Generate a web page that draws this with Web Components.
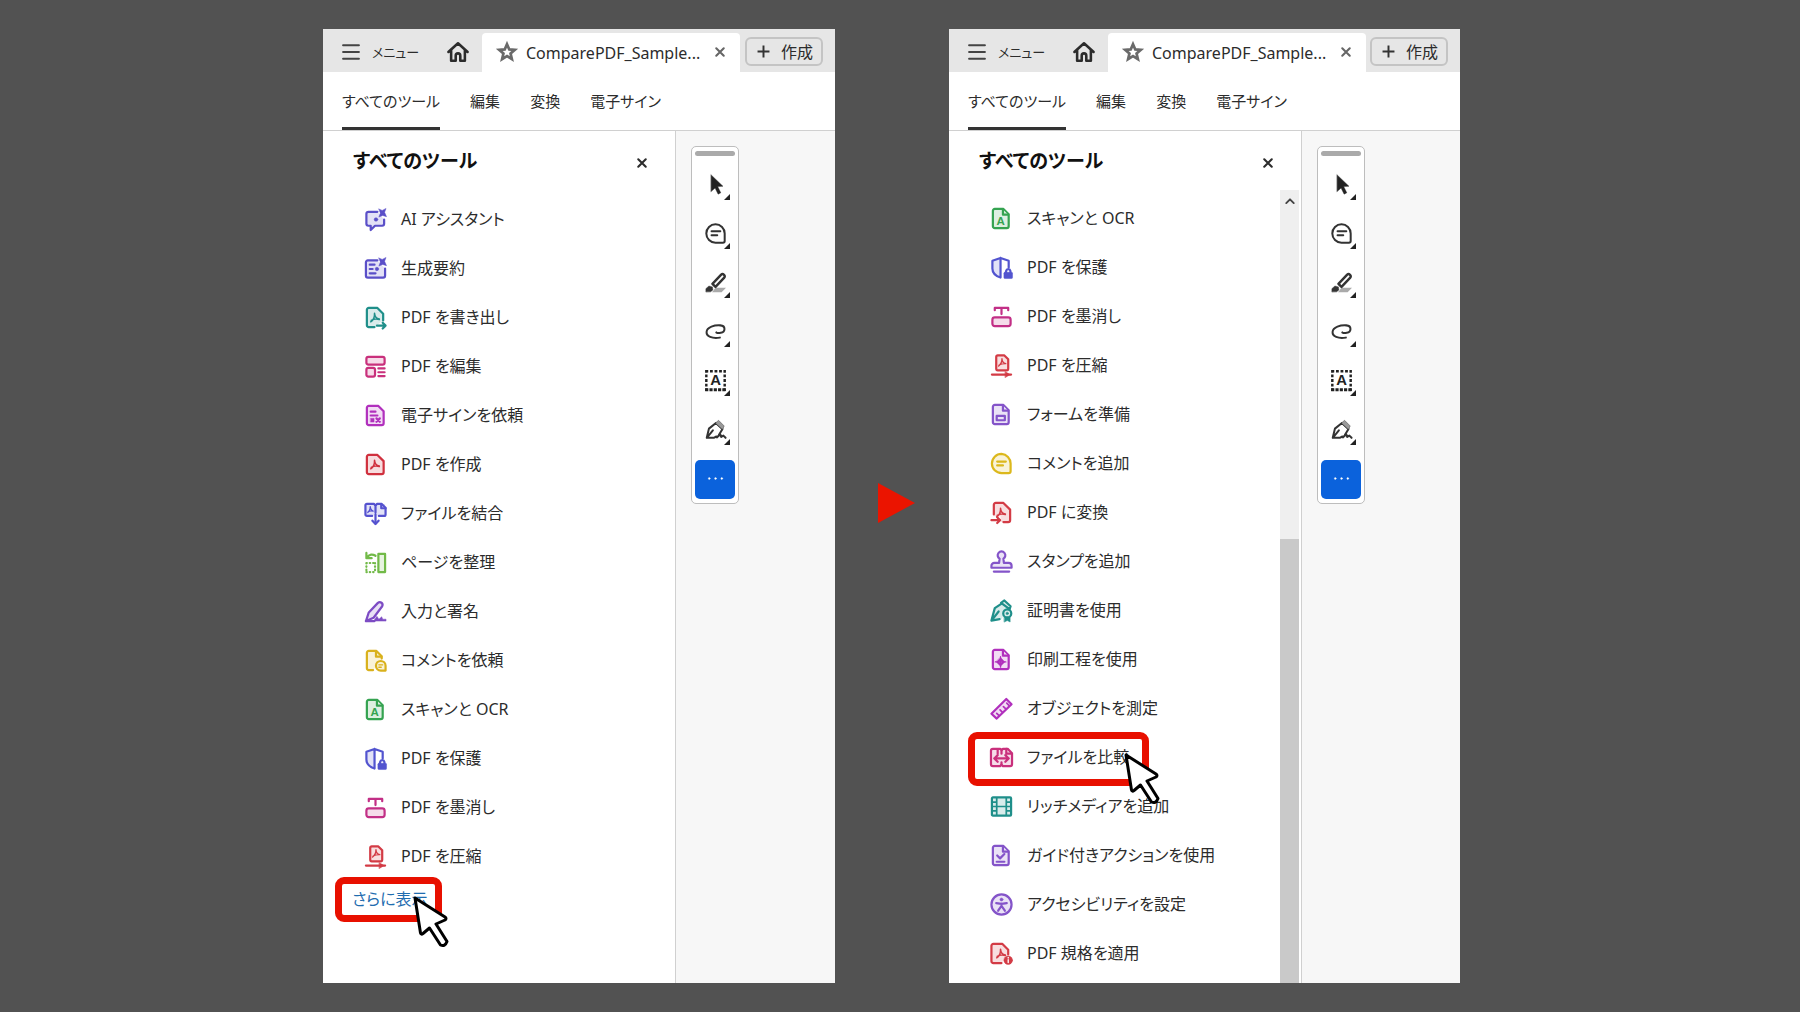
<!DOCTYPE html>
<html lang="ja">
<head>
<meta charset="utf-8">
<title>すべてのツール</title>
<style>
html,body{margin:0;height:100%}
body{background:#525252;color:#2c2c2c;font:16px/24px "Noto Sans","Noto Sans CJK JP",sans-serif;font-feature-settings:"palt"}
</style>
</head>
<body>
<guide-stage>
  <reader-window slot="before">
    <tool-panel>
      <tool-item icon="ai">AI アシスタント</tool-item>
      <tool-item icon="summary">生成要約</tool-item>
      <tool-item icon="export">PDF を書き出し</tool-item>
      <tool-item icon="edit">PDF を編集</tool-item>
      <tool-item icon="request">電子サインを依頼</tool-item>
      <tool-item icon="create">PDF を作成</tool-item>
      <tool-item icon="combine">ファイルを結合</tool-item>
      <tool-item icon="organize">ページを整理</tool-item>
      <tool-item icon="sign">入力と署名</tool-item>
      <tool-item icon="reqcomment">コメントを依頼</tool-item>
      <tool-item icon="scan">スキャンと OCR</tool-item>
      <tool-item icon="protect">PDF を保護</tool-item>
      <tool-item icon="redact">PDF を墨消し</tool-item>
      <tool-item icon="compress">PDF を圧縮</tool-item>
      <more-link slot="more">さらに表示</more-link>
    </tool-panel>
  </reader-window>
  <reader-window slot="after">
    <tool-panel scrolled>
      <tool-item icon="scan">スキャンと OCR</tool-item>
      <tool-item icon="protect">PDF を保護</tool-item>
      <tool-item icon="redact">PDF を墨消し</tool-item>
      <tool-item icon="compress">PDF を圧縮</tool-item>
      <tool-item icon="form">フォームを準備</tool-item>
      <tool-item icon="comment">コメントを追加</tool-item>
      <tool-item icon="convert">PDF に変換</tool-item>
      <tool-item icon="stamp">スタンプを追加</tool-item>
      <tool-item icon="cert">証明書を使用</tool-item>
      <tool-item icon="print">印刷工程を使用</tool-item>
      <tool-item icon="measure">オブジェクトを測定</tool-item>
      <tool-item icon="compare" marked>ファイルを比較</tool-item>
      <tool-item icon="media">リッチメディアを追加</tool-item>
      <tool-item icon="action">ガイド付きアクションを使用</tool-item>
      <tool-item icon="access">アクセシビリティを設定</tool-item>
      <tool-item icon="standard">PDF 規格を適用</tool-item>
    </tool-panel>
  </reader-window>
</guide-stage>

<script>
const doc='<path d="M5 2h9l5.500 5.500v12.500a2 2 0 0 1-2 2H5a2 2 0 0 1-2-2V4a2 2 0 0 1 2-2z"/>';
const fold='<path d="M13.500 2.500V8H19"/>';
const curl='<path class="n" stroke-width="1.600" d="M11 7.500c.2 4-1.600 7.500-4 9M11 7.500c.2 3.500 2 5.500 5 6M7.500 15c2.300-1.500 5-2 8.500-1"/>';
const spark='<path class="s" d="M15.500 1l3.500 1.500L23 .5l-1.500 4L23.500 9l-4-1.200L15.500 9.500 17 5.500z"/>';
const ICONS={
ai:['#5a4fc8','<path d="M14 4H4.500a2 2 0 0 0-2 2v10.500a2 2 0 0 0 2 2H7V23l4.500-4.500H19a2 2 0 0 0 2-2V12"/>'+spark+'<circle class="s" cx="12.500" cy="12" r="1.900"/>'],
summary:['#5a4fc8','<path d="M14 3.500H4a2 2 0 0 0-2 2v14a2 2 0 0 0 2 2h16a2 2 0 0 0 2-2V12"/><path class="n" d="M6 8h5M6 12.500h3M6 17h6"/>'+spark+'<circle class="s" cx="13.500" cy="12.500" r="1.800"/>'],
export:['#1f8f8a','<path d="M11 22H5a2 2 0 0 1-2-2V4a2 2 0 0 1 2-2h9l6 6v7"/>'+curl+'<path class="n" d="M13.500 20.500h9M19.500 17.500l3 3-3 3"/>'],
edit:['#c9307c','<rect x="2.500" y="2" width="19" height="8" rx="2"/><rect x="2.500" y="13.500" width="9" height="9" rx="2"/><path class="n" d="M15 14h6.500M15 18h6.500M15 22h6.500"/>'],
request:['#b130bd','<path d="M5 2h10l5.500 5.500V20a2 2 0 0 1-2 2H5a2 2 0 0 1-2-2V4a2 2 0 0 1 2-2z"/><path class="n" d="M7 8h5M7 12h7"/><rect class="s" x="7" y="15" width="3.500" height="3.800"/><path class="n" d="M13 15l3.500 3.500m0-3.500L13 18.500"/>'],
create:['#d0303e','<path d="M5 2h9l6.500 6.500V20a2 2 0 0 1-2 2H5a2 2 0 0 1-2-2V4a2 2 0 0 1 2-2z"/>'+curl],
combine:['#5552cf','<path stroke="none" d="M2 2h20v12H2z"/><path class="n" d="M12 4v7M8.500 14.500H3A1.500 1.500 0 0 1 1.500 13V3.500A1.500 1.500 0 0 1 3 2h7.500L12 4l1.500-2H18.500l4 4v7a1.500 1.500 0 0 1-1.500 1.500h-5.500M12 13v9.500"/><path class="n" d="M18 2.500v4h4.500M8.800 19.500l3.200 3.500 3.200-3.500"/><path class="n" stroke-width="1.400" d="M6.500 5c0 3-1 5-2.500 6M6.500 5c.3 2.500 1.500 4 3 4.500M4.500 10c1.500-1 3-1 5-.5"/>'],
organize:['#72ba48','<rect x="15" y="3" width="7" height="19"/><path class="n" d="M2.500 2v5.500H8M3 7c2.500-4 6-4 9-2"/><path class="n" stroke-dasharray=".5 3" d="M2.500 12.500h9M2.500 22h9M2.500 12.500V22M11.500 12.500V22"/>'],
sign:['#7d4cc4','<path d="M2 22l3-9L14.500 3c2.500-2 6 .5 4.500 3.500L10 18.500z"/><path class="n" d="M2 22h9"/><path class="s" d="M10 22l3.500-5 2 3 3-2.500 1 2.500h3.500v2H10z"/>'],
reqcomment:['#d9b11c','<path d="M9.500 22H5a2 2 0 0 1-2-2V4a2 2 0 0 1 2-2h8l5.500 5.500V10"/><path class="n" d="M12.500 2.500V8H18"/><path d="M17.500 12.500a5 5 0 1 0 0 10h5v-5a5 5 0 0 0-5-5z"/><path class="n" stroke-width="1.400" d="M15.500 16.500h4M15.500 19h2.500"/>'],
scan:['#35a351',doc+fold+'<text x="11" y="19">A</text>'],
protect:['#5254cf','<path stroke="none" d="M11 22.500C5 20.500 2.500 17 2.500 13V5L11 2z"/><path class="n" d="M11 22.500C5 20.500 2.500 17 2.500 13V5L11 2zM11 2l8.500 3v7"/><rect class="s" x="14.500" y="17" width="9" height="6.500" rx="1"/><path class="n" d="M16.800 17v-1.500a2.300 2.300 0 0 1 4.500 0V17"/>'],
redact:['#c22f86','<rect x="2.500" y="13" width="19" height="9" rx="2.500"/><path class="n" d="M5 5.500V3h14v2.500M12 3v6.500"/>'],
compress:['#d33b45','<path d="M8 1.500h7l4 4v10a1.500 1.500 0 0 1-1.500 1.500H8a1.500 1.500 0 0 1-1.500-1.500V3A1.500 1.500 0 0 1 8 1.500z"/><path class="n" stroke-width="1.400" d="M12.500 5c0 4-1.500 6-3.500 7.500M12.500 5c0 3 1.500 4.500 4 5M9.500 11.500c2-1.200 4-1.500 6.500-1.500"/><path class="n" d="M2 21.500H22"/><path class="s" d="M16 18.500l5 3-5 3z"/>'],
form:['#8454c9',doc+fold+'<rect class="n" x="7" y="13.500" width="8.500" height="4.500"/>'],
comment:['#dcb81c','<path d="M12 2a10 10 0 1 0 0 20h7.500a2 2 0 0 0 2-2v-8A10 10 0 0 0 12 2z"/><path class="n" d="M7.500 10h9M7.500 14h6"/>'],
convert:['#d33b45','<path stroke="none" d="M4 2h10l7 7v13H11V16H4z"/><path class="n" d="M4 14V4a2 2 0 0 1 2-2h8l7 7v11a2 2 0 0 1-2 2h-5"/>'+curl+'<path class="n" d="M1.500 20h9M7.500 17l3 3-3 3"/>'],
stamp:['#8454c9','<path d="M9.500 13.500L10 9a4 4 0 1 1 4 0l.5 4.500h5a3 3 0 0 1 3 3v2h-21v-2a3 3 0 0 1 3-3z"/><path class="n" d="M4 22.500h16"/>'],
cert:['#1f8f8a','<path stroke="none" d="M2 21L5 9.500 13 4l6 6-7 11z"/><path class="n" d="M10 21l-8.500 1.500L5 9.500l7.500-5M2 22l7-9"/><path d="M11.500 4l3.500-2.500 6.500 6-1 3z"/><circle cx="18" cy="15" r="4.200"/><circle class="s" cx="18" cy="15" r="1.300"/><path class="s" d="M15 19h6v5l-3-1.500-3 1.500z"/>'],
print:['#b130bd',doc+fold+'<path class="s" d="M11 10l4.500 4.500L11 19l-4.500-4.500z"/><circle cx="11" cy="14.500" r="1" stroke="none"/><path class="n" stroke-width="1.400" d="M11 9v11M5.500 14.500h11"/>'],
measure:['#b130bd','<path d="M1.500 17.500L17 2l5.500 5.500-15.500 15z"/><path class="n" stroke-width="1.800" d="M9.500 19.500L7 17M13 16l-2.500-2.500M16.500 12.500L14 10M20 9l-2.500-2.500"/>'],
compare:['#c9307c','<path d="M12 4.500a1.500 1.500 0 0 0-1.500-1.500H3a2 2 0 0 0-2 2v14a2 2 0 0 0 2 2h7.500l1.500-1.500 1.500 1.500H21a2 2 0 0 0 2-2V7.500L18.500 3h-5z"/><path class="n" d="M12 4.500V8M12 17v2.500M8 3.500V8M17 3v5h5M4.500 13h15M8 9.500L4.500 13 8 16.500M16 9.500l3.500 3.500-3.500 3.500"/>'],
media:['#1f8f8a','<rect x="2" y="2.500" width="20" height="19" rx="1"/><path class="n" stroke-width="1.800" d="M7 3v18M17 3v18M7 12h10M2 7.500h5M2 12h5M2 16.500h5M17 7.500h5M17 12h5M17 16.500h5"/>'],
action:['#8454c9',doc+fold+'<path class="n" d="M7.500 12l3 3 4.500-4.500M7 18.500h8"/>'],
access:['#8454c9','<circle cx="12" cy="12" r="10.500"/><circle class="s" cx="12" cy="6.800" r="1.600"/><path class="n" d="M6.500 10.500l5.500.8 5.500-.8M12 11v3M8.500 18.500L12 13.500l3.500 5"/>'],
standard:['#d33b45','<path d="M12 22H3.500a2 2 0 0 1-2-2V4a2 2 0 0 1 2-2H13l6 6v5"/>'+curl+'<circle class="s" cx="19" cy="19" r="4.500"/><path d="M19 18.500v3M19 16v.8" stroke="#fff" stroke-width="1.400"/>'],
menu:['#444','<path class="n" stroke-width="2.800" d="M1.500 3h21M1.500 12h21M1.500 21h21"/>'],
home:['#2c2c2c','<path class="n" stroke-width="2.800" d="M1.500 12L12 2.500 22.500 12M4.500 10v11.500H9.500V16a2.500 2.500 0 0 1 5 0v5.500h5V10"/>'],
star:['#6a6a6a','<path class="n" stroke-width="3" stroke-linejoin="miter" d="M12 3.500l2.500 5.700 6 .5-4.600 4 1.400 6L12 16.500l-5.300 3.200 1.400-6-4.600-4 6-.5z"/>'],
close:['currentColor','<path class="n" stroke-width="5" d="M3 3l18 18M21 3L3 21"/>'],
plus:['#333','<path class="n" stroke-width="3.600" stroke-linecap="butt" d="M12 1v22M1 12h22"/>'],
up:['#444','<path class="n" stroke-width="4.500" d="M3 17l9-9 9 9"/>'],
select:['#222','<path class="s" d="M7 1l13.500 13-6 .3 3.500 7.200-3 1.500-3.500-7L7 20z"/>'],
note:['#333','<path class="n" d="M12 1.500a10.500 10.500 0 1 0 0 21h8.500a2 2 0 0 0 2-2V12A10.500 10.500 0 0 0 12 1.500z"/><path class="n" d="M7.500 9.500h10M7.500 14h6.500"/>'],
marker:['#333','<path style="fill:#aaa;stroke:none" d="M12 18h12l-5 5H8z"/><path class="n" stroke-width="2.800" d="M8.500 13.500L18.500 3c2-2 5.500 1.500 3.500 3.500L12 17z"/><path class="s" d="M1 22.500v-3.500l3.500-3 4 1 .5 3.500-2.500 2z"/>'],
loop:['#333','<path class="n" d="M17 19C8 20.500 1.500 17.500 1.800 12.500 2.200 7 11 4.500 17.500 5c6.500.5 6 7.500.5 8.500-3 .5-5.500 0-5-.5"/>'],
textbox:['#222','<path class="n" stroke-linecap="butt" stroke-width="2.800" stroke-dasharray="3.200 2" d="M.5 1.500h23M1.500 0v24M22.500 0v24"/><path class="n" stroke-linecap="butt" stroke-width="3.500" stroke-dasharray="3.600 1.300" d="M.2 22.500h23.600"/><text x="12" y="17.500" style="font-size:17px">A</text>'],
pen:['#333','<path class="n" d="M2 21.500L4.500 11l8-6.500 7.500 7-4 6.500M2 21.500l7-8.500M2 21.500h8l3-1.500"/><path class="s" style="fill:#999" d="M12 4.500l3.500-3 6.500 6.500-2 4z"/><path class="n" d="M13.500 21l4-3.500 1 3 2.500-1.500 2.500 2.500"/>'],
dots:['#fff','<circle class="s" cx="2" cy="12" r="1.500"/><circle class="s" cx="12" cy="12" r="1.500"/><circle class="s" cx="22" cy="12" r="1.500"/>']
};
function define(name,html,setup){
  const t=document.createElement('template');t.innerHTML=html;
  customElements.define(name,class extends HTMLElement{
    constructor(){super();this.attachShadow({mode:'open'}).append(t.content.cloneNode(true));}
    connectedCallback(){if(setup&&!this.ready){this.ready=true;setup(this,this.shadowRoot);}}
  });
}
const reset='button{all:unset;box-sizing:border-box;cursor:pointer;display:flex;align-items:center}';

define('ui-icon',`<style>
:host{display:block;flex:none;width:24px;height:24px}
svg{display:block;width:100%;height:100%;overflow:visible;fill:color-mix(in srgb,var(--c) 17%,white);stroke:var(--c);stroke-width:2.3;stroke-linejoin:round;stroke-linecap:round}
.n{fill:none}.s{fill:var(--c);stroke-width:.5}
text{font:bold 12px "Liberation Sans",sans-serif;text-anchor:middle;fill:var(--c);stroke:none}
</style><svg viewBox="0 0 24 24" aria-hidden="true"></svg>`,(el,root)=>{
  const [c,body]=ICONS[el.getAttribute('name')];
  const svg=root.querySelector('svg');svg.style.setProperty('--c',c);svg.innerHTML=body;
});

define('mouse-cursor',`<style>
:host{display:block;position:absolute;width:38px;height:52px;z-index:3}
svg{display:block;fill:#fff;stroke:#000;stroke-width:3;stroke-linejoin:round}
</style><svg width="38" height="52" viewBox="0 0 38 52" aria-hidden="true"><path d="M2 2L7.500 37Q8 39 10 37.500L16.500 32 27.500 49Q32 51 34 45.500L23 28 32 24Q34 22.500 32 21z"/></svg>`);

define('guide-stage',`<style>
:host{display:grid;grid-template-columns:323fr 512fr 114fr 511fr 340fr;min-height:100vh;box-sizing:border-box;padding:29px 0}
::slotted([slot=before]){grid-column:2}
::slotted([slot=after]){grid-column:4}
slot{display:contents}
.next{display:block;grid-column:3;grid-row:1;place-self:center;margin:0 0 6px 8px;fill:#eb1400}
</style><slot name="before"></slot>
<svg class="next" width="38" height="40" viewBox="0 0 38 40" aria-hidden="true"><path d="M1 0L38 20 1 40z"/></svg>
<slot name="after"></slot>`);

define('reader-window',`<style>
:host{display:flex;flex-direction:column;background:#fff;min-width:0}
.body{display:flex;flex:1;min-height:0}
.doc{flex:1;background:#f7f7f7;padding:15px}
</style><tab-strip></tab-strip><tool-nav></tool-nav>
<div class="body"><slot></slot><div class="doc"><quick-tools></quick-tools></div></div>`);

define('tab-strip',`<style>${reset}
:host{display:flex;height:43px;background:#e6e6e6;padding:4px 12px 0 19px;box-sizing:border-box;align-items:stretch}
button,.tab{padding-bottom:2px}
.menu{gap:12px;font-size:13px;width:105px}
.menu ui-icon{width:18px;height:18px}
.home{width:35px}
.home ui-icon{width:22px;height:22px}
.tab{display:flex;align-items:center;background:#fff;width:258px;box-sizing:border-box;padding:0 15px 0 14px;border-radius:4px 4px 0 0}
.star ui-icon{width:22px;height:22px}
.name{flex:1;padding-left:8px}
.x{color:#666}.x ui-icon{width:10px;height:10px}
.new{align-self:center;width:78px;height:29px;margin:0 0 2px auto;border:2px solid #c4c4c4;border-radius:6px;padding:0 8px 0 10px;justify-content:space-between}
.new ui-icon{width:13px;height:13px}
</style>
<button class="menu"><ui-icon name="menu"></ui-icon>メニュー</button>
<button class="home" aria-label="ホーム"><ui-icon name="home"></ui-icon></button>
<div class="tab"><button class="star" aria-label="お気に入り"><ui-icon name="star"></ui-icon></button><span class="name">ComparePDF_Sample...</span><button class="x" aria-label="閉じる"><ui-icon name="close"></ui-icon></button></div>
<button class="new"><ui-icon name="plus"></ui-icon>作成</button>`);

define('tool-nav',`<style>${reset}
:host{display:flex;height:59px;box-sizing:border-box;border-bottom:1px solid #d0d0d0;padding:0 19px;gap:30px;font-size:15px}
button{border-bottom:3px solid transparent;padding-top:3px}
button.on{border-color:#333}
</style><button class="on">すべてのツール</button><button>編集</button><button>変換</button><button>電子サイン</button>`);

define('tool-panel',`<style>${reset}
:host{display:flex;flex-direction:column;width:353px;box-sizing:border-box;border-right:1px solid #d0d0d0;flex:none}
header{display:flex;align-items:center;justify-content:space-between;height:59px;padding:0 28px 0 30px;flex:none}
h2{margin:0;font-size:19px;line-height:30px;color:#111}
header button{padding-top:4px}
header ui-icon{width:10px;height:10px}
.rows{display:flex;flex:1;min-height:0}
.list{flex:1;padding-top:5px}
.bar{display:none;width:19px;margin-right:2px;background:#efefef;flex-direction:column;align-items:center}
.bar ui-icon{width:10px;height:10px;margin:6px 0 0}
.thumb{width:100%;margin-top:auto;background:#c9c9c9;height:56%}
:host([scrolled]) .bar{display:flex}
:host([scrolled]) .list{padding-top:4px}
</style><header><h2>すべてのツール</h2><button aria-label="パネルを閉じる"><ui-icon name="close"></ui-icon></button></header>
<div class="rows"><div class="list"><slot></slot><slot name="more"></slot></div><div class="bar"><ui-icon name="up"></ui-icon><div class="thumb"></div></div></div>`);

define('tool-item',`<style>${reset}
:host{display:block;position:relative;height:49px}
button{height:100%;width:100%;padding:0 0 1px 41px;gap:14px;white-space:nowrap}
ui-icon{width:23px;height:23px}
.mark{display:none;position:absolute;left:19px;top:-1px;width:181px;height:54px;box-sizing:border-box;border:7px solid #e81000;border-radius:9px}
:host([marked]) .mark{display:block}
mouse-cursor{left:149px;top:14px}
</style><button><span id="icon"></span><span><slot></slot></span></button><div class="mark"><mouse-cursor></mouse-cursor></div>`,(el,root)=>{
  const icon=document.createElement('ui-icon');
  icon.setAttribute('name',el.getAttribute('icon'));
  root.getElementById('icon').replaceWith(icon);
});

define('more-link',`<style>
:host{display:flex;position:relative;height:36px;align-items:center;padding-left:29px}
a{color:#1f6db0;text-decoration:none}
.mark{position:absolute;left:12px;top:-4px;width:107px;height:45px;box-sizing:border-box;border:7px solid #e81000;border-radius:9px}
mouse-cursor{left:71px;top:12px}
</style><a href="#"><slot></slot></a><div class="mark"><mouse-cursor></mouse-cursor></div>`);

define('quick-tools',`<style>${reset}
:host{display:flex;flex-direction:column;align-items:center;width:48px;height:358px;box-sizing:border-box;background:#fff;border:1px solid #bdbdbd;border-radius:5px;padding:4px 3px}
.grip{width:100%;height:5px;border-radius:3px;background:#aaa;flex:none}
button{width:40px;height:49px;justify-content:center;position:relative;padding-bottom:2px}
button ui-icon{width:21px;height:21px}
.t::after{content:"";position:absolute;right:5px;bottom:10px;border:3px solid #222;border-top-color:transparent;border-left-color:transparent}
.first{margin-top:5px}
.more{background:#0b62dc;border-radius:5px;height:39px;margin-top:5px}
.more ui-icon{width:15px;height:15px}
</style><div class="grip"></div>
<button class="t first" aria-label="選択"><ui-icon name="select"></ui-icon></button>
<button class="t" aria-label="コメント"><ui-icon name="note"></ui-icon></button>
<button class="t" aria-label="ハイライト"><ui-icon name="marker"></ui-icon></button>
<button class="t" aria-label="描画"><ui-icon name="loop"></ui-icon></button>
<button class="t" aria-label="テキスト"><ui-icon name="textbox"></ui-icon></button>
<button class="t" aria-label="署名"><ui-icon name="pen"></ui-icon></button>
<button class="more" aria-label="その他"><ui-icon name="dots"></ui-icon></button>`);
</script>
</body>
</html>
